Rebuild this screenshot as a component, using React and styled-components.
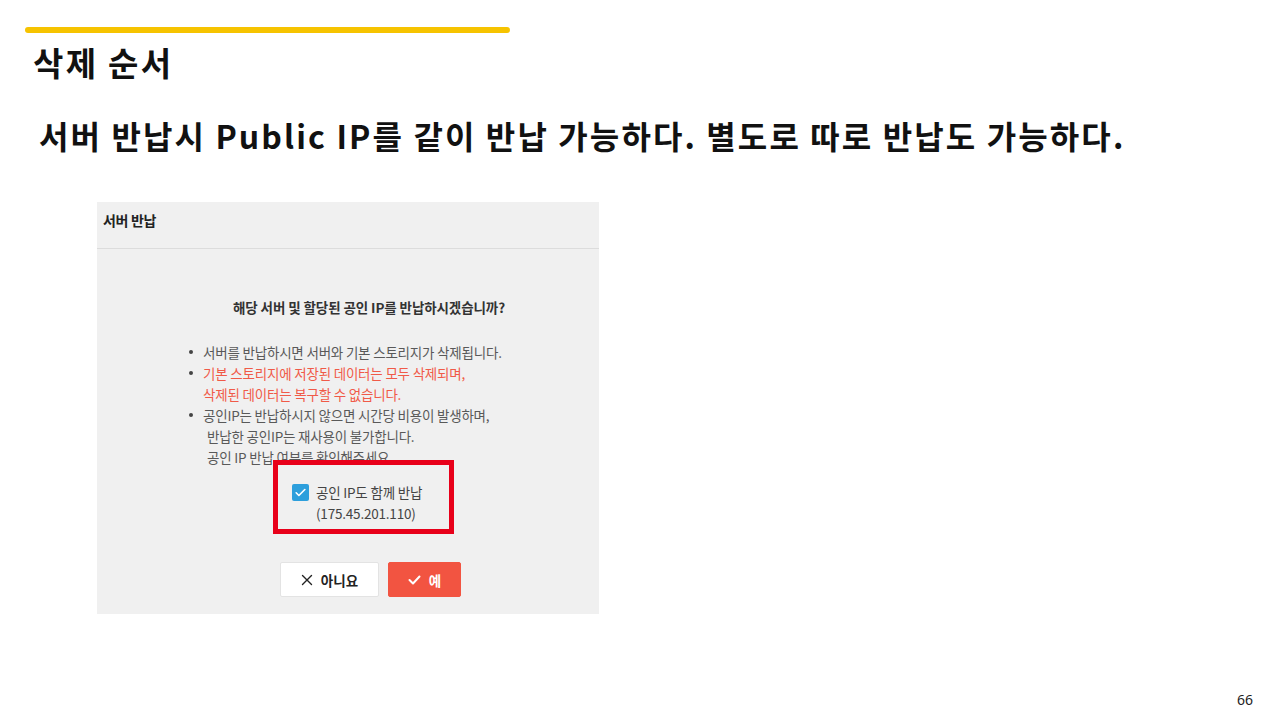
import React from "react";
import styled, { createGlobalStyle } from "styled-components";

const Global = createGlobalStyle`
  html, body { margin: 0; padding: 0; background: #fff; }
  body { font-family: "Noto Sans CJK KR", "Noto Sans", sans-serif; }
  * { box-sizing: border-box; }
`;

const Slide = styled.div`
  width: 1280px;
  height: 720px;
  display: flex;
  flex-direction: column;
  padding: 27px 27px 0 0;
  color: #111;
`;

const AccentBar = styled.div`
  margin-left: 25px;
  width: 485px;
  height: 6px;
  border-radius: 3px;
  background: #f6c300;
`;

const Title = styled.h1`
  margin: 9px 0 0 33px;
  font-size: 33px;
  line-height: 40px;
  font-weight: 700;
  letter-spacing: 2.3px;
`;

const Subtitle = styled.h2`
  margin: 33px 0 0 39px;
  font-size: 32px;
  line-height: 40px;
  font-weight: 700;
  letter-spacing: 2.1px;
  white-space: nowrap;
`;

const Dialog = styled.div`
  margin: 47px 0 0 97px;
  width: 502px;
  background: #f0f0f0;
  display: flex;
  flex-direction: column;
`;

const DialogHeader = styled.div`
  height: 47px;
  border-bottom: 1px solid #dcdcdc;
  padding: 8px 0 0 6px;
  font-size: 14px;
  line-height: 20px;
  font-weight: 700;
  color: #222;
  letter-spacing: -0.3px;
`;

const DialogBody = styled.div`
  display: flex;
  flex-direction: column;
  align-items: flex-start;
  padding: 48px 0 17px 0;
`;

const Question = styled.div`
  margin-left: 136px;
  font-size: 13.5px;
  line-height: 20px;
  font-weight: 700;
  color: #333;
  letter-spacing: -0.1px;
`;

const List = styled.div`
  margin: 24px 0 0 92px;
  display: flex;
  flex-direction: column;
`;

const Line = styled.div`
  display: flex;
  align-items: center;
  height: 21px;
  padding-left: ${(p) => p.$indent || 0}px;
  font-size: 13.5px;
  color: ${(p) => (p.$red ? "#f05a48" : "#595959")};
  letter-spacing: -0.2px;
  white-space: nowrap;
`;

const Dot = styled.span`
  width: 4px;
  height: 4px;
  border-radius: 50%;
  background: #444;
  margin: 0 10px 0 0;
  flex: none;
`;

const Spacer = styled.span`
  width: 14px;
  flex: none;
`;

const Highlight = styled.div`
  position: relative;
  margin: -7px 0 0 176px;
  width: 181px;
  height: 74px;
  border: 5px solid #e8001a;
  padding: 17px 0 0 14px;
  display: flex;
  align-items: flex-start;
  gap: 7px;
`;

const Check = styled.span`
  width: 17px;
  height: 17px;
  border-radius: 2px;
  background: #2d9fdc;
  display: flex;
  align-items: center;
  justify-content: center;
  flex: none;
  margin-top: 2px;
`;

const CheckText = styled.div`
  font-size: 13.5px;
  line-height: 21px;
  color: #444;
  letter-spacing: -0.2px;
`;

const Buttons = styled.div`
  margin: 28px 0 0 183px;
  display: flex;
  gap: 9px;
`;

const Button = styled.button`
  height: 35px;
  width: ${(p) => p.$w}px;
  border-radius: 2px;
  border: 1px solid ${(p) => (p.$primary ? "#f25441" : "#e3e3e3")};
  background: ${(p) => (p.$primary ? "#f25441" : "#fff")};
  color: ${(p) => (p.$primary ? "#fff" : "#222")};
  font-family: "Noto Sans CJK KR", sans-serif;
  font-size: 13.5px;
  font-weight: 700;
  display: flex;
  align-items: center;
  justify-content: center;
  gap: 8px;
  padding: 0;
`;

const PageNo = styled.div`
  margin: auto 0 11px auto;
  font-family: "Noto Sans", sans-serif;
  font-size: 14px;
  color: #222;
`;

export default function App() {
  return (
    <>
      <Global />
      <Slide>
        <AccentBar />
        <Title>삭제 순서</Title>
        <Subtitle>서버 반납시 Public IP를 같이 반납 가능하다. 별도로 따로 반납도 가능하다.</Subtitle>
        <Dialog>
          <DialogHeader>서버 반납</DialogHeader>
          <DialogBody>
            <Question>해당 서버 및 할당된 공인 IP를 반납하시겠습니까?</Question>
            <List>
              <Line><Dot />서버를 반납하시면 서버와 기본 스토리지가 삭제됩니다.</Line>
              <Line $red><Dot />기본 스토리지에 저장된 데이터는 모두 삭제되며,</Line>
              <Line $red><Spacer />삭제된 데이터는 복구할 수 없습니다.</Line>
              <Line><Dot />공인IP는 반납하시지 않으면 시간당 비용이 발생하며,</Line>
              <Line $indent={4}><Spacer />반납한 공인IP는 재사용이 불가합니다.</Line>
              <Line $indent={4}><Spacer />공인 IP 반납 여부를 확인해주세요</Line>
            </List>
            <Highlight>
              <Check>
                <svg width="13" height="13" viewBox="0 0 24 24" fill="none" stroke="#fff" strokeWidth="3" strokeLinecap="round" strokeLinejoin="round">
                  <path d="M4 12.5l5 5L20 6.5" />
                </svg>
              </Check>
              <CheckText>
                공인 IP도 함께 반납
                <br />
                (175.45.201.110)
              </CheckText>
            </Highlight>
            <Buttons>
              <Button $w={99}>
                <svg width="12" height="12" viewBox="0 0 12 12" stroke="#222" strokeWidth="1.4" strokeLinecap="round">
                  <path d="M1.5 1.5l9 9M10.5 1.5l-9 9" />
                </svg>
                아니요
              </Button>
              <Button $w={73} $primary>
                <svg width="13" height="10" viewBox="0 0 13 10" fill="none" stroke="#fff" strokeWidth="2" strokeLinecap="round" strokeLinejoin="round">
                  <path d="M1.5 5l3.5 3.5L11.5 1.5" />
                </svg>
                예
              </Button>
            </Buttons>
          </DialogBody>
        </Dialog>
        <PageNo>66</PageNo>
      </Slide>
    </>
  );
}
